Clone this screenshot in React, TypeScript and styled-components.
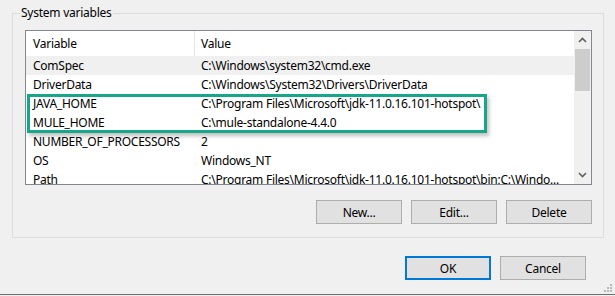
import React from "react";
import styled, { createGlobalStyle } from "styled-components";

const Global = createGlobalStyle`
  html, body { margin: 0; padding: 0; background: #f0f0f0; }
  body { font-family: "Noto Sans", "Segoe UI", sans-serif; }
`;

const Page = styled.div`
  width: 615px;
  height: 295px;
  box-sizing: border-box;
  background: #f0f0f0;
  border-bottom: 1px solid #6e6e6e;
  position: relative;
  overflow: hidden;
  font-size: 12px;
  letter-spacing: -0.25px;
  color: #000;
  display: flex;
  flex-direction: column;
`;

const Group = styled.fieldset`
  box-sizing: border-box;
  margin: 5px 0 0 12px;
  width: 592px;
  height: 233px;
  border: 1px solid #dcdcdc;
  padding: 9px 11px 0 12px;
  display: flex;
  flex-direction: column;
  position: relative;
`;

const Legend = styled.legend`
  padding: 0 1px;
  margin-left: -5px;
  line-height: 16px;
  font-size: 12px;
`;

const List = styled.div`
  box-sizing: border-box;
  width: 567px;
  height: 155px;
  border: 1px solid #828790;
  background: #fff;
  display: flex;
  overflow: hidden;
`;

const Table = styled.div`
  flex: 1;
  display: flex;
  flex-direction: column;
  overflow: hidden;
`;

const HeaderRow = styled.div`
  display: grid;
  grid-template-columns: 168px 1fr;
  height: 25px;
  flex-shrink: 0;
`;

const HeaderCell = styled.div<{ $divider?: boolean }>`
  display: flex;
  align-items: center;
  padding-left: ${(p) => (p.$divider ? "6px" : "7px")};
  border-left: ${(p) => (p.$divider ? "1px solid #e5e5e5" : "none")};
`;

const Row = styled.div<{ $shaded?: boolean }>`
  display: grid;
  grid-template-columns: 168px 1fr;
  height: 19px;
  flex-shrink: 0;
  background: ${(p) => (p.$shaded ? "#f0f0f0" : "#fff")};
`;

const Cell = styled.div`
  display: flex;
  align-items: center;
  padding-left: 7px;
  white-space: nowrap;
  overflow: hidden;
`;

const ScrollBar = styled.div`
  width: 17px;
  flex-shrink: 0;
  background: #f0f0f0;
  display: flex;
  flex-direction: column;
  align-items: center;
`;

const ArrowBox = styled.div`
  height: 18px;
  width: 17px;
  display: flex;
  align-items: center;
  justify-content: center;
  flex-shrink: 0;
`;

const Thumb = styled.div`
  width: 15px;
  height: 42px;
  background: #cdcdcd;
  margin-right: 1px;
  flex-shrink: 0;
`;

const Track = styled.div`
  flex: 1;
`;

const Highlight = styled.div`
  position: absolute;
  left: 14px;
  top: 73px;
  width: 460px;
  height: 39px;
  box-sizing: border-box;
  border: 3px solid #17a68a;
  box-shadow: 2px 3px 4px rgba(0, 0, 0, 0.25);
  pointer-events: none;
`;

const ButtonRow = styled.div<{ $right: number; $top: number }>`
  display: flex;
  justify-content: flex-end;
  gap: 9px;
  margin-top: ${(p) => p.$top}px;
  padding-right: ${(p) => p.$right}px;
`;

const Button = styled.button<{ $default?: boolean }>`
  box-sizing: border-box;
  width: 86px;
  height: 24px;
  background: #e1e1e1;
  border: ${(p) => (p.$default ? "2px solid #0078d7" : "1px solid #adadad")};
  font-family: "Noto Sans", "Segoe UI", sans-serif;
  font-size: 12px;
  letter-spacing: -0.25px;
  color: #000;
  padding: 0;
  border-radius: 0;
`;

const Grip = styled.svg`
  position: absolute;
  right: 3px;
  bottom: 2px;
`;

const Chevron = ({ up }: { up?: boolean }) => (
  <svg width="9" height="6" viewBox="0 0 9 6">
    <path
      d={up ? "M1 5 L4.5 1.5 L8 5" : "M1 1 L4.5 4.5 L8 1"}
      fill="none"
      stroke="#606060"
      strokeWidth="1.6"
    />
  </svg>
);

const rows: [string, string][] = [
  ["ComSpec", "C:\\Windows\\system32\\cmd.exe"],
  ["DriverData", "C:\\Windows\\System32\\Drivers\\DriverData"],
  ["JAVA_HOME", "C:\\Program Files\\Microsoft\\jdk-11.0.16.101-hotspot\\"],
  ["MULE_HOME", "C:\\mule-standalone-4.4.0"],
  ["NUMBER_OF_PROCESSORS", "2"],
  ["OS", "Windows_NT"],
  ["Path", "C:\\Program Files\\Microsoft\\jdk-11.0.16.101-hotspot\\bin;C:\\Windo..."],
];

export default function App() {
  return (
    <>
      <Global />
      <Page>
        <Group>
          <Legend>System variables</Legend>
          <List>
            <Table>
              <HeaderRow>
                <HeaderCell>Variable</HeaderCell>
                <HeaderCell $divider>Value</HeaderCell>
              </HeaderRow>
              {rows.map(([k, v], i) => (
                <Row key={k} $shaded={i === 0}>
                  <Cell>{k}</Cell>
                  <Cell>{v}</Cell>
                </Row>
              ))}
            </Table>
            <ScrollBar>
              <ArrowBox>
                <Chevron up />
              </ArrowBox>
              <Thumb />
              <Track />
              <ArrowBox>
                <Chevron />
              </ArrowBox>
            </ScrollBar>
          </List>
          <Highlight />
          <ButtonRow $right={0} $top={15}>
            <Button>New...</Button>
            <Button>Edit...</Button>
            <Button>Delete</Button>
          </ButtonRow>
        </Group>
        <ButtonRow $right={29} $top={18}>
          <Button $default>OK</Button>
          <Button>Cancel</Button>
        </ButtonRow>
        <Grip width="9" height="9" viewBox="0 0 9 9">
          {[
            [7, 1],
            [4, 4], [7, 4],
            [1, 7], [4, 7], [7, 7],
          ].map(([x, y]) => (
            <rect key={`${x}-${y}`} x={x} y={y} width="2" height="2" fill="#b8b8b8" />
          ))}
        </Grip>
      </Page>
    </>
  );
}
